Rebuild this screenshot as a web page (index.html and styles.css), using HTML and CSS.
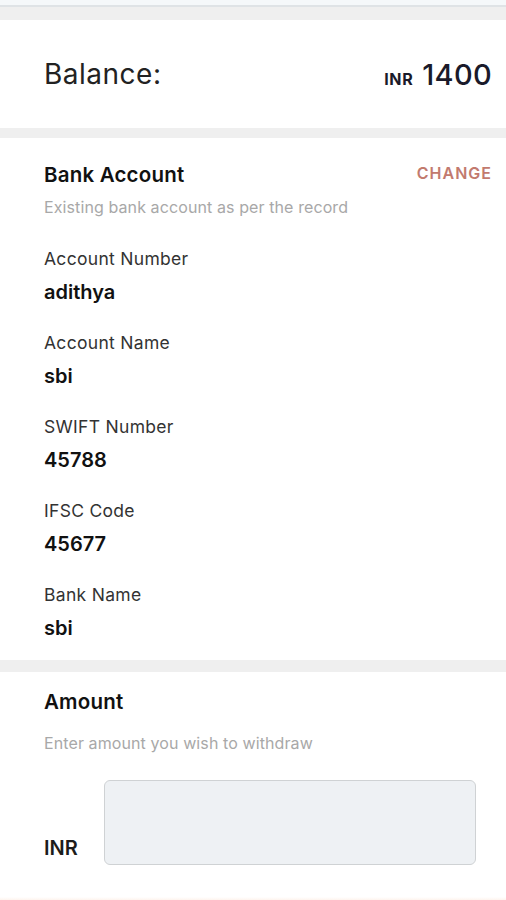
FILE: index.html
```html
<!DOCTYPE html>
<html lang="en">

<head>
  <meta charset="UTF-8">
  <meta name="viewport" content="width=device-width, initial-scale=1.0">
  <link rel="stylesheet" href="styles.css">
  <title>Withdraw</title>
</head>

<body>
  <div id="topbar"></div>

  <div class="card" id="balance-card">
    <span class="balance-label">Balance:</span>
    <span class="balance-value"><span class="currency">INR</span>1400</span>
  </div>

  <div class="card" id="bank-card">
    <div class="card-head">
      <div>
        <div class="card-title">Bank Account</div>
        <div class="card-sub">Existing bank account as per the record</div>
      </div>
      <a href="#" class="change-link">CHANGE</a>
    </div>

    <div class="field">
      <div class="field-label">Account Number</div>
      <div class="field-value">adithya</div>
    </div>
    <div class="field">
      <div class="field-label">Account Name</div>
      <div class="field-value">sbi</div>
    </div>
    <div class="field">
      <div class="field-label">SWIFT Number</div>
      <div class="field-value">45788</div>
    </div>
    <div class="field">
      <div class="field-label">IFSC Code</div>
      <div class="field-value">45677</div>
    </div>
    <div class="field">
      <div class="field-label">Bank Name</div>
      <div class="field-value">sbi</div>
    </div>
  </div>

  <div class="card" id="amount-card">
    <div class="card-title">Amount</div>
    <div class="card-sub">Enter amount you wish to withdraw</div>
    <div class="amount-row">
      <span class="amount-currency">INR</span>
      <input type="text" class="amount-input">
    </div>
  </div>

  <div id="bottom-edge"></div>
</body>

</html>
```

FILE: styles.css
```css
body {
  margin: 0;
  font-family: 'Inter', 'Liberation Sans', sans-serif;
  background-color: #efefef;
  color: #1c1c1c;
}

#topbar {
  height: 5px;
  background-color: #f5f8fa;
  border-bottom: 2px solid #dfe3e6;
}

.card {
  background-color: #fff;
  padding: 0 14px 0 44px;
}

#balance-card {
  margin-top: 13px;
  height: 108px;
  display: flex;
  align-items: center;
  justify-content: space-between;
}

.balance-label {
  font-size: 28px;
  letter-spacing: 0.5px;
  color: #222;
}

.balance-value {
  font-size: 29px;
  font-weight: 500;
  letter-spacing: 0.3px;
  color: #1a1a2a;
}

.currency {
  font-size: 16px;
  font-weight: 700;
  letter-spacing: 0.6px;
  margin-right: 9px;
}

#bank-card {
  margin-top: 10px;
  padding-top: 25px;
  padding-bottom: 20px;
}

.card-head {
  display: flex;
  justify-content: space-between;
  align-items: flex-start;
}

.card-title {
  font-size: 20.5px;
  font-weight: 600;
  line-height: 24px;
  letter-spacing: 0.2px;
  color: #111;
}

.card-sub {
  font-size: 16px;
  letter-spacing: 0.1px;
  color: #a8a8a8;
  margin-top: 10px;
}

.change-link {
  font-size: 16px;
  font-weight: 600;
  letter-spacing: 1px;
  color: #c27a6e;
  text-decoration: none;
}

.field {
  margin-top: 28px;
}

.card-head + .field {
  margin-top: 31px;
}

.field-label {
  font-size: 17.5px;
  letter-spacing: 0.3px;
  color: #333;
  line-height: 22px;
}

.field-value {
  font-size: 20px;
  font-weight: 600;
  color: #111;
  line-height: 24px;
  margin-top: 10px;
}

#amount-card {
  margin-top: 12px;
  padding-top: 18px;
  padding-bottom: 31px;
}

#amount-card .card-sub {
  margin-top: 19px;
}

.amount-row {
  display: flex;
  align-items: flex-end;
  margin-top: 27px;
}

.amount-currency {
  font-size: 20px;
  font-weight: 600;
  line-height: 24px;
  width: 60px;
  margin-bottom: 5px;
}

.amount-input {
  width: 372px;
  height: 85px;
  box-sizing: border-box;
  background-color: #eef1f4;
  border: 1px solid #cfd2d4;
  border-radius: 6px;
}

#bottom-edge {
  height: 5px;
  background: linear-gradient(180deg, #fff 20%, #fdf0e8);
}
```
